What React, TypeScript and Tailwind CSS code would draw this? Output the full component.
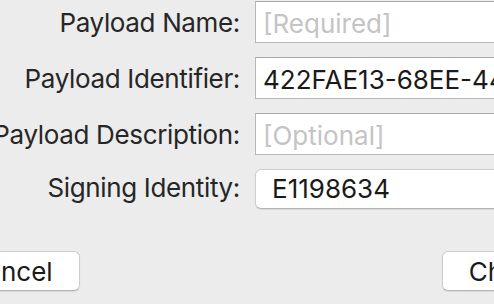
const font = "[font-family:Inter,'Liberation_Sans',sans-serif]";

function Label({ children }: { children: string }) {
  return (
    <div className="flex justify-end h-[42px] pt-[4px] leading-[36px] whitespace-nowrap tracking-[-0.35px] text-[#262626]">
      {children}
    </div>
  );
}

function Field({ value, placeholder }: { value?: string; placeholder?: string }) {
  return (
    <div className="h-[42px] bg-white border border-[#b7b7b7] border-t-[#a9a9a9] pl-[7px] pt-[4px] leading-[36px] whitespace-nowrap overflow-hidden">
      {value ? <span className="text-[#1a1a1a]">{value}</span> : <span className="text-[#c4c4c4]">{placeholder}</span>}
    </div>
  );
}

export default function App() {
  return (
    <div className={`w-[494px] h-[304px] overflow-hidden bg-[#ececec] text-[26px] ${font}`}>
      <div className="grid grid-cols-[240px_440px] gap-x-[15px] gap-y-[14px] pt-px">
        <Label>Payload Name:</Label>
        <Field placeholder="[Required]" />

        <Label>Payload Identifier:</Label>
        <Field value="422FAE13-68EE-44C6-9A3B-0F1D2E3C4B5A" />

        <Label>Payload Description:</Label>
        <Field placeholder="[Optional]" />

        <div className="flex justify-end h-[40px] pt-[1px] leading-[36px] whitespace-nowrap tracking-[-0.35px] text-[#262626]">
          Signing Identity:
        </div>
        <div className="h-[40px] bg-white rounded-[6px] border border-[#cdcdcd] border-b-[#b4b4b4] shadow-[0_1px_1px_rgba(0,0,0,0.08)] pl-[16px] leading-[38px] text-[#1a1a1a] whitespace-nowrap">
          E1198634
        </div>
      </div>

      <div className="flex gap-[362px] ml-[-60px] mt-[42px]">
        <button className="w-[140px] h-[40px] shrink-0 bg-white rounded-[6px] border border-[#cdcdcd] border-b-[#b4b4b4] shadow-[0_1px_1px_rgba(0,0,0,0.08)] leading-[35px] text-[#1a1a1a]">
          Cancel
        </button>
        <button className="w-[148px] h-[40px] shrink-0 bg-white rounded-[6px] border border-[#cdcdcd] border-b-[#b4b4b4] shadow-[0_1px_1px_rgba(0,0,0,0.08)] leading-[35px] text-[#1a1a1a]">
          Choose
        </button>
      </div>
    </div>
  );
}
